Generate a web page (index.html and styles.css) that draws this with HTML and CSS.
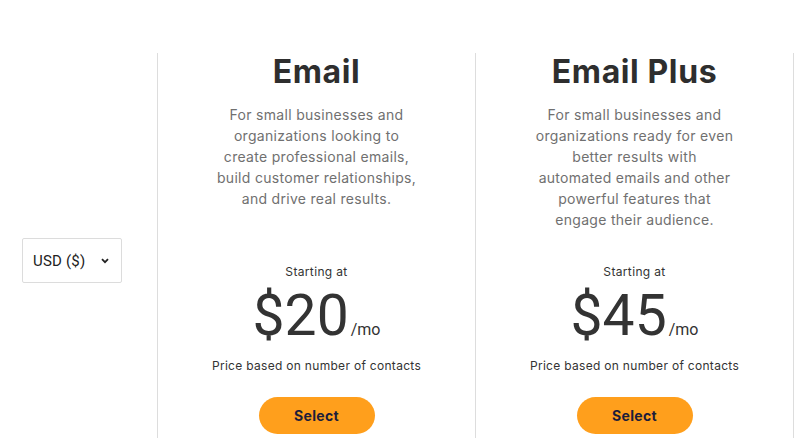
FILE: index.html
```html
<!DOCTYPE html>
<html lang="en">
<head>
<meta charset="utf-8">
<title>Pricing</title>
<link rel="stylesheet" href="styles.css">
</head>
<body>
<main class="pricing">
  <div class="currency-col">
    <div class="currency-select">
      <span class="currency-label">USD ($)</span>
      <svg class="chevron" width="8" height="6" viewBox="0 0 8 6" aria-hidden="true"><polyline points="1,1.2 4,4.2 7,1.2" fill="none" stroke="#222" stroke-width="1.8"/></svg>
    </div>
  </div>
  <section class="plan">
    <h2 class="plan-title">Email</h2>
    <p class="plan-desc">For small businesses and<br>organizations looking to<br>create professional emails,<br>build customer relationships,<br>and drive real results.</p>
    <div class="starting">Starting at</div>
    <div class="price"><span class="amount">$20</span><span class="per">/mo</span></div>
    <div class="basis">Price based on number of contacts</div>
    <button class="select-btn">Select</button>
  </section>
  <section class="plan">
    <h2 class="plan-title">Email Plus</h2>
    <p class="plan-desc">For small businesses and<br>organizations ready for even<br>better results with<br>automated emails and other<br>powerful features that<br>engage their audience.</p>
    <div class="starting">Starting at</div>
    <div class="price"><span class="amount">$45</span><span class="per">/mo</span></div>
    <div class="basis">Price based on number of contacts</div>
    <button class="select-btn">Select</button>
  </section>
  <section class="plan plan-next"></section>
</main>
</body>
</html>
```
FILE: styles.css
```css
html, body {
  margin: 0;
  padding: 0;
  background: #fff;
  overflow: hidden;
}
body {
  font-family: "Inter", "Open Sans", sans-serif;
  color: #333;
}
.pricing {
  display: flex;
  align-items: center;
  margin-top: 53px;
  width: 811px;
}
.currency-col {
  width: 157px;
  flex: 0 0 157px;
}
.currency-select {
  margin-left: 22px;
  width: 100px;
  height: 45px;
  box-sizing: border-box;
  border: 1px solid #dcdcdc;
  border-radius: 2px;
  display: flex;
  align-items: center;
  justify-content: space-between;
  padding: 0 12px 0 10px;
  font-family: "Roboto", sans-serif;
  font-size: 15px;
  letter-spacing: 0.2px;
  color: #222;
}
.chevron { display: block; }
.plan {
  flex: 0 0 318px;
  width: 318px;
  box-sizing: border-box;
  border-left: 1px solid #dddddd;
  text-align: center;
  padding: 0 0 34px;
}
.plan-next {
  flex: 1 0 auto;
  align-self: stretch;
}
.plan-title {
  margin: 0;
  font-size: 32px;
  line-height: 38px;
  font-weight: 700;
  letter-spacing: 0.6px;
  color: #2e2e2e;
}
.plan-desc {
  margin: 13px 0 0;
  height: 159px;
  font-size: 14px;
  line-height: 21px;
  letter-spacing: 0.3px;
  color: #707070;
}
.starting {
  font-size: 12px;
  line-height: 18px;
  letter-spacing: 0.35px;
  color: #333;
}
.price {
  margin-top: 5px;
  height: 60px;
  font-size: 57px;
  line-height: 60px;
  font-family: "Roboto", sans-serif;
  color: #333;
}
.amount {
  line-height: 60px;
}
.per {
  font-size: 16px;
  line-height: 0;
  margin-left: 2px;
}
.basis {
  margin-top: 11px;
  font-size: 12px;
  line-height: 18px;
  letter-spacing: 0.3px;
  color: #333;
}
.select-btn {
  display: inline-block;
  margin-top: 22px;
  width: 116px;
  height: 37px;
  border: 0;
  border-radius: 19px;
  background: #ff9f1c;
  color: #1d1d3a;
  font-family: "Inter", "Open Sans", sans-serif;
  font-size: 14px;
  font-weight: 700;
  letter-spacing: 0.3px;
  cursor: pointer;
  vertical-align: top;
}
```
